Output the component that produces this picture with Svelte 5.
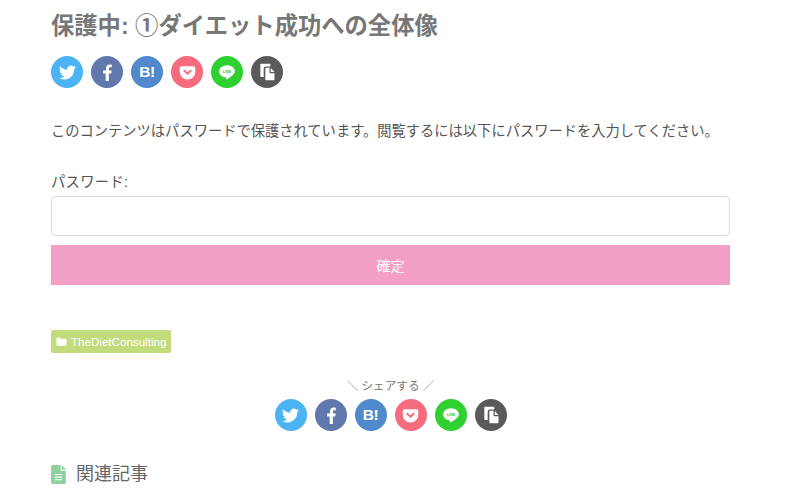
<script>
	const shareButtons = ['twitter', 'facebook', 'hatena', 'pocket', 'line', 'copy'];
</script>

{#snippet shareIcons()}
	<ul class="share-list">
		{#each shareButtons as name}
			<li class="share-btn {name}">
				{#if name === 'twitter'}
					<svg viewBox="0 0 24 24" width="17" height="17">
						<path fill="#fff" d="M23.95 4.57a10 10 0 0 1-2.82.77 4.96 4.96 0 0 0 2.16-2.72 9.9 9.9 0 0 1-3.12 1.18 4.92 4.92 0 0 0-8.38 4.48A13.98 13.98 0 0 1 1.64 3.16a4.92 4.92 0 0 0 1.52 6.57 4.9 4.9 0 0 1-2.23-.62v.06a4.92 4.92 0 0 0 3.95 4.83 4.9 4.9 0 0 1-2.22.08 4.93 4.93 0 0 0 4.6 3.42A9.87 9.87 0 0 1 0 19.54a13.94 13.94 0 0 0 7.55 2.21c9.05 0 14-7.5 14-13.98 0-.21 0-.42-.02-.63a10 10 0 0 0 2.46-2.55z"/>
					</svg>
				{:else if name === 'facebook'}
					<svg viewBox="0 0 24 24" width="18" height="18">
						<path fill="#fff" d="M14.500 24v-10h3.200l.5-3.900h-3.700V7.600c0-1.100.3-1.900 1.900-1.900h2V2.200c-.4 0-1.500-.2-2.900-.2-2.900 0-4.800 1.800-4.800 5v3.100H6.900V14h3.300v10z"/>
					</svg>
				{:else if name === 'hatena'}
					<span class="hatena-text">B!</span>
				{:else if name === 'pocket'}
					<svg viewBox="0 0 24 24" width="17" height="17">
						<path fill="#fff" d="M3.500 3h17A2.500 2.500 0 0 1 23 5.500V11a11 11 0 0 1-22 0V5.500A2.500 2.500 0 0 1 3.500 3z"/>
						<path fill="none" stroke="#f76b7e" stroke-width="2.600" stroke-linecap="round" stroke-linejoin="round" d="M7.500 9.500 12 13.800l4.500-4.300"/>
					</svg>
				{:else if name === 'line'}
					<svg viewBox="0 0 24 24" width="18" height="18">
						<path fill="#fff" d="M12 3C6.200 3 1.500 6.700 1.500 11.200c0 4 3.700 7.400 8.700 8.100.9.200.6 1 .4 2-.1.500.3.800.9.500 1.500-.8 6.400-3.600 8.600-6.200 1.500-1.600 2.400-3 2.400-4.400C22.500 6.700 17.800 3 12 3z"/>
						<text x="12" y="13.500" text-anchor="middle" class="line-text">LINE</text>
					</svg>
				{:else}
					<svg viewBox="0 0 24 24" width="20" height="20">
						<path fill="#fff" d="M4 3.200C4 2.500 4.500 2 5.200 2h9.600c.7 0 1.200.5 1.200 1.200V5.500h-5.500A2.500 2.500 0 0 0 8 8v10H5.200C4.500 18 4 17.500 4 16.800z"/>
						<path fill="#fff" d="M10 8.200C10 7.500 10.500 7 11.200 7H15v5.500c0 .5.500 1 1 1h5v7.300c0 .7-.5 1.200-1.200 1.200h-8.600c-.7 0-1.200-.5-1.200-1.200z"/>
						<path fill="#fff" d="M16.500 7.300 21 12h-4.500z"/>
					</svg>
				{/if}
			</li>
		{/each}
	</ul>
{/snippet}

<main class="content">
	<h1>保護中: ①ダイエット成功への全体像</h1>
	<div class="top-share">
		{@render shareIcons()}
	</div>

	<p class="notice">このコンテンツはパスワードで保護されています。閲覧するには以下にパスワードを入力してください。</p>

	<form class="password-form" onsubmit={(e) => e.preventDefault()}>
		<label for="pwbox">パスワード:</label>
		<input id="pwbox" type="password" />
		<button type="submit">確定</button>
	</form>

	<div class="categories">
		<a class="cat-tag" href="#top">
			<svg viewBox="0 0 24 24" width="11" height="11">
				<path fill="#fff" d="M1 5.500C1 4.100 2.100 3 3.500 3h5.300l2.400 3h9.300C21.900 6 23 7.100 23 8.500v10c0 1.400-1.100 2.500-2.500 2.500h-17C2.100 21 1 19.900 1 18.500z"/>
			</svg>
			TheDietConsulting
		</a>
	</div>

	<section class="bottom-share">
		<div class="share-title">＼ シェアする ／</div>
		{@render shareIcons()}
	</section>

	<h2 class="related">
		<svg viewBox="0 0 14 18" width="15" height="19">
			<path fill="#8fd19e" d="M1.500 0H9v4.500c0 .5.500 1 1 1h4v11c0 .8-.7 1.500-1.500 1.500h-11C.7 18 0 17.300 0 16.500v-15C0 .7.700 0 1.500 0z"/>
			<path fill="#8fd19e" d="M10 0l4 4.300h-4z"/>
			<path fill="none" stroke="#fff" stroke-width="1.100" d="M3.500 9h7M3.500 11.500h7M3.500 14h7"/>
		</svg>
		関連記事
	</h2>
</main>

<style>
	:global(body) {
		margin: 0;
		background: #fff;
		overflow: hidden;
	}

	.content {
		box-sizing: border-box;
		width: 679px;
		height: 497px;
		overflow: hidden;
		margin-left: 51px;
		color: #555;
		font-family: "Liberation Sans", "Noto Sans CJK JP", sans-serif;
		font-size: 14px;
	}

	h1 {
		margin: 0;
		padding-top: 12px;
		font-size: 23.3px;
		line-height: 28px;
		font-weight: 700;
		color: #777;
	}

	.top-share {
		margin-top: 16px;
	}

	.share-list {
		display: flex;
		gap: 8px;
		margin: 0;
		padding: 0;
		list-style: none;
	}

	.share-btn {
		width: 32px;
		height: 32px;
		border-radius: 50%;
		display: flex;
		align-items: center;
		justify-content: center;
	}

	.twitter { background: #4cb4f5; }
	.facebook { background: #6078ac; }
	.hatena { background: #5089cc; }
	.pocket { background: #f76b7e; }
	.line { background: #2fd02f; }
	.copy { background: #5a5a5a; }

	.hatena-text {
		color: #fff;
		font-family: "Liberation Sans", sans-serif;
		font-weight: 700;
		font-size: 15.5px;
		letter-spacing: -0.5px;
	}

	.line-text {
		font-family: "Liberation Sans", sans-serif;
		font-size: 5px;
		font-weight: 700;
		fill: #2fd02f;
	}

	.notice {
		margin: 31px 0 0;
		line-height: 24px;
		font-size: 14.28px;
		white-space: nowrap;
	}

	.password-form {
		margin-top: 27px;
		display: flex;
		flex-direction: column;
	}

	label {
		font-size: 14.3px;
		line-height: 24px;
		letter-spacing: 0.3px;
	}

	input {
		box-sizing: border-box;
		height: 40px;
		margin-top: 2px;
		border: 1px solid #ddd;
		border-radius: 4px;
		background: #fff;
	}

	button {
		height: 40px;
		margin-top: 9px;
		border: 0;
		background: #f39ec4;
		color: #fff;
		font: inherit;
		font-size: 14px;
	}

	.categories {
		margin-top: 45px;
		display: flex;
	}

	.cat-tag {
		display: flex;
		align-items: center;
		gap: 4px;
		height: 23px;
		padding: 0 5px;
		border-radius: 2px;
		background: #c2dc7c;
		color: #fff;
		font-size: 11.6px;
		text-decoration: none;
	}

	.bottom-share {
		margin-top: 24px;
		display: flex;
		flex-direction: column;
		align-items: center;
	}

	.share-title {
		font-size: 11.6px;
		line-height: 18px;
		color: #777;
	}

	.bottom-share .share-list {
		margin-top: 4px;
	}

	.related {
		margin: 30px 0 0;
		display: flex;
		align-items: center;
		gap: 10px;
		font-size: 18px;
		line-height: 26px;
		font-weight: 400;
		color: #666;
	}
</style>
